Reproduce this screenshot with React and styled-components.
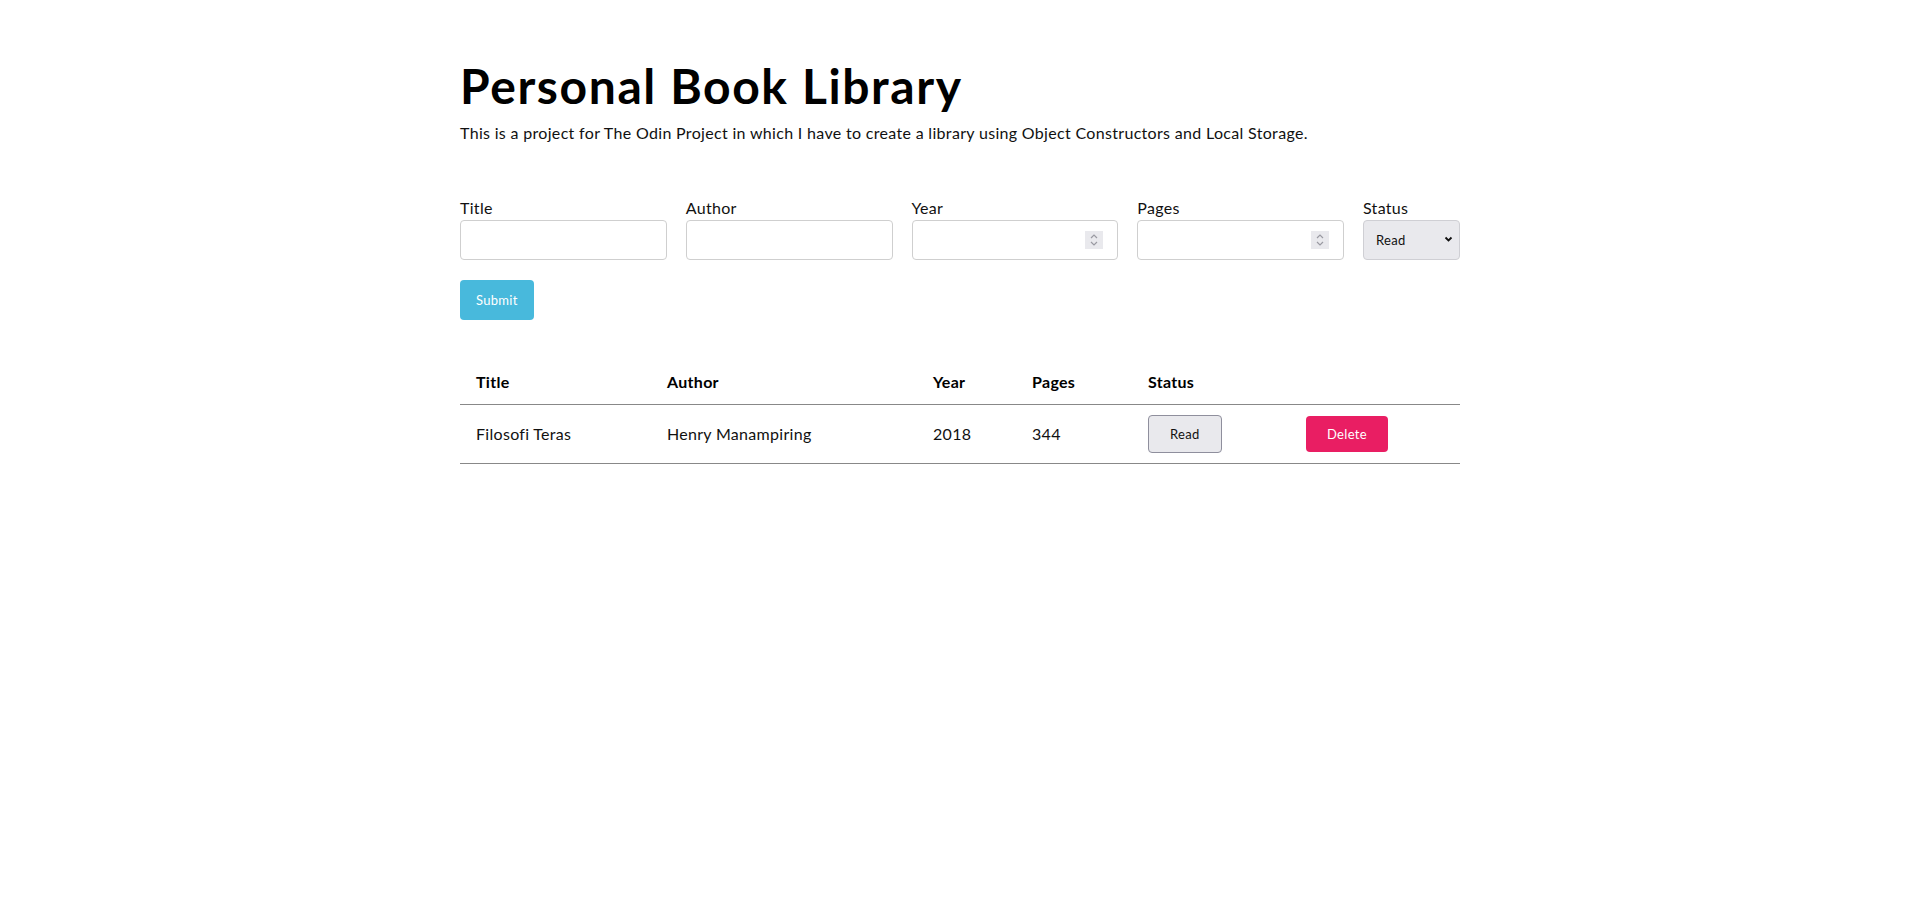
import React from "react";
import styled, { createGlobalStyle } from "styled-components";

const GlobalStyle = createGlobalStyle`
  * { box-sizing: border-box; }
  body {
    margin: 0;
    background: #fff;
    color: #111;
    font-family: "Lato", "Open Sans", sans-serif;
    letter-spacing: 0.3px;
  }
`;

const Container = styled.main`
  width: 1000px;
  margin: 0 auto;
  padding-top: 57px;
`;

const Heading = styled.h1`
  margin: 0 0 6px;
  font-size: 48px;
  line-height: 57.6px;
  font-weight: 700;
  letter-spacing: 1.6px;
  color: #000;
`;

const Intro = styled.p`
  margin: 0;
  font-size: 16px;
  line-height: 24px;
  letter-spacing: 0.32px;
  color: #111;
`;

const Form = styled.form`
  margin-top: 51px;
  display: flex;
  flex-direction: column;
  align-items: flex-start;
  gap: 20px;
`;

const FieldsRow = styled.div`
  display: flex;
  gap: 19px;
  width: 100%;
`;

const Field = styled.label`
  display: flex;
  flex-direction: column;
  flex: ${(p) => (p.$narrow ? "0 0 97px" : "1 1 0")};
  min-width: 0;
`;

const LabelText = styled.span`
  font-size: 16px;
  line-height: 24px;
  color: #111;
`;

const InputWrap = styled.div`
  position: relative;
  height: 40px;
`;

const TextInput = styled.input`
  width: 100%;
  height: 40px;
  border: 1px solid #cfcfcf;
  border-radius: 4px;
  padding: 0 12px;
  font: inherit;
  background: #fff;
  outline: none;
  appearance: none;
  -moz-appearance: textfield;
  &::-webkit-inner-spin-button,
  &::-webkit-outer-spin-button {
    -webkit-appearance: none;
    margin: 0;
  }
`;

const Spinner = styled.span`
  position: absolute;
  right: 15px;
  top: 11px;
  width: 18px;
  height: 18px;
  background: #e9e9ed;
  display: flex;
  align-items: center;
  justify-content: center;
  pointer-events: none;
`;

const Select = styled.select`
  width: 100%;
  height: 40px;
  border: 1px solid #cfcfd4;
  border-radius: 4px;
  background: #e9e9ed;
  padding: 0 12px;
  font-family: inherit;
  font-size: 13px;
  letter-spacing: 0.3px;
  color: #111;
  appearance: none;
  outline: none;
`;

const Chevron = styled.span`
  position: absolute;
  right: 7px;
  top: 16px;
  display: flex;
  pointer-events: none;
`;

const SubmitButton = styled.button`
  height: 40px;
  padding: 0 16px;
  border: none;
  border-radius: 4px;
  background: #48b9dc;
  color: #fff;
  font-family: inherit;
  font-size: 13px;
  letter-spacing: 0.3px;
  cursor: pointer;
`;

const Table = styled.table`
  margin-top: 40px;
  width: 100%;
  border-collapse: collapse;
  table-layout: fixed;
`;

const HeadCell = styled.th`
  text-align: left;
  padding: 10px 16px;
  font-size: 16px;
  line-height: 24px;
  font-weight: 700;
  color: #000;
  border-bottom: 1px solid #888;
`;

const Cell = styled.td`
  padding: 10px 16px;
  font-size: 16px;
  line-height: 24px;
  color: #111;
  border-bottom: 1px solid #888;
  vertical-align: middle;
`;

const StatusButton = styled.button`
  height: 38px;
  padding: 0 21px;
  border: 1px solid #8f8f9d;
  border-radius: 4px;
  background: #e9e9ed;
  color: #111;
  font-family: inherit;
  font-size: 13px;
  letter-spacing: 0.3px;
  cursor: pointer;
`;

const DeleteButton = styled.button`
  height: 36px;
  padding: 0 21px;
  border: none;
  border-radius: 4px;
  background: #e91e63;
  color: #fff;
  font-family: inherit;
  font-size: 13px;
  letter-spacing: 0.3px;
  cursor: pointer;
`;

const SpinIcon = () => (
  <svg width="10" height="14" viewBox="0 0 10 14" fill="none" stroke="#9a9aa2" strokeWidth="1.2">
    <path d="M2 5 L5 2 L8 5" />
    <path d="M2 9 L5 12 L8 9" />
  </svg>
);

const ChevronIcon = () => (
  <svg width="9" height="6" viewBox="0 0 9 6" fill="none" stroke="#111" strokeWidth="1.8">
    <path d="M1.5 1.5 L4.5 4.5 L7.5 1.5" />
  </svg>
);

const columns = [
  { label: "Title", width: 191 },
  { label: "Author", width: 266 },
  { label: "Year", width: 99 },
  { label: "Pages", width: 116 },
  { label: "Status", width: 158 },
  { label: "", width: 170 },
];

const books = [
  { title: "Filosofi Teras", author: "Henry Manampiring", year: 2018, pages: 344, read: true },
];

export default function App() {
  return (
    <>
      <GlobalStyle />
      <Container>
        <Heading>Personal Book Library</Heading>
        <Intro>
          This is a project for The Odin Project in which I have to create a library using Object
          Constructors and Local Storage.
        </Intro>
        <Form onSubmit={(e) => e.preventDefault()}>
          <FieldsRow>
            <Field>
              <LabelText>Title</LabelText>
              <InputWrap>
                <TextInput type="text" />
              </InputWrap>
            </Field>
            <Field>
              <LabelText>Author</LabelText>
              <InputWrap>
                <TextInput type="text" />
              </InputWrap>
            </Field>
            <Field>
              <LabelText>Year</LabelText>
              <InputWrap>
                <TextInput type="number" />
                <Spinner>
                  <SpinIcon />
                </Spinner>
              </InputWrap>
            </Field>
            <Field>
              <LabelText>Pages</LabelText>
              <InputWrap>
                <TextInput type="number" />
                <Spinner>
                  <SpinIcon />
                </Spinner>
              </InputWrap>
            </Field>
            <Field $narrow>
              <LabelText>Status</LabelText>
              <InputWrap>
                <Select defaultValue="read">
                  <option value="read">Read</option>
                  <option value="unread">Not Read</option>
                </Select>
                <Chevron>
                  <ChevronIcon />
                </Chevron>
              </InputWrap>
            </Field>
          </FieldsRow>
          <SubmitButton type="submit">Submit</SubmitButton>
        </Form>
        <Table>
          <colgroup>
            {columns.map((c, i) => (
              <col key={i} style={{ width: c.width }} />
            ))}
          </colgroup>
          <thead>
            <tr>
              {columns.map((c, i) => (
                <HeadCell key={i}>{c.label}</HeadCell>
              ))}
            </tr>
          </thead>
          <tbody>
            {books.map((b, i) => (
              <tr key={i}>
                <Cell>{b.title}</Cell>
                <Cell>{b.author}</Cell>
                <Cell>{b.year}</Cell>
                <Cell>{b.pages}</Cell>
                <Cell>
                  <StatusButton type="button">{b.read ? "Read" : "Not Read"}</StatusButton>
                </Cell>
                <Cell>
                  <DeleteButton type="button">Delete</DeleteButton>
                </Cell>
              </tr>
            ))}
          </tbody>
        </Table>
      </Container>
    </>
  );
}
